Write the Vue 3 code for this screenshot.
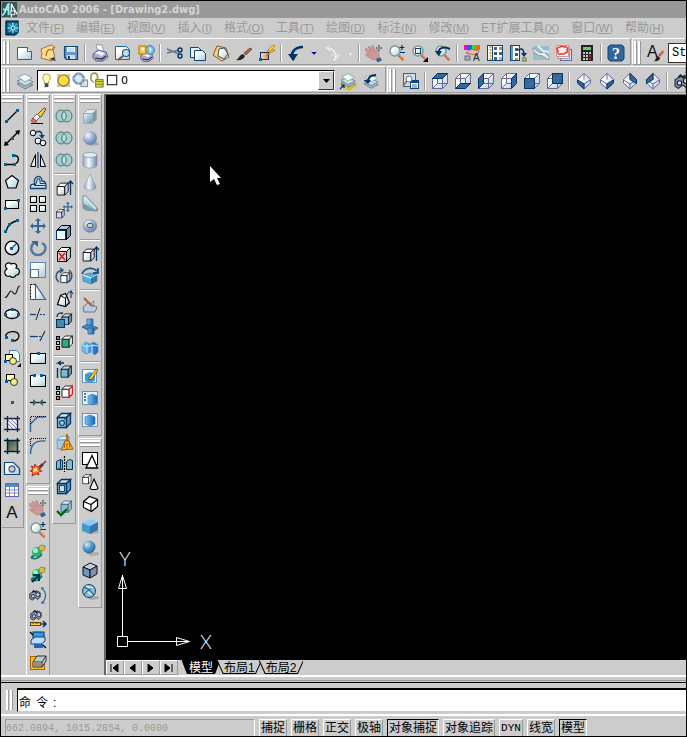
<script setup>
import { ref } from 'vue'

const navy = '#036'
const p = (d, fill = 'none', stroke = 'none', w = 1, extra = '') =>
  `<path d="${d}" fill="${fill}" stroke="${stroke}" stroke-width="${w}" ${extra}/>`
const c = (x, y, r, fill = 'none', stroke = 'none', w = 1) =>
  `<circle cx="${x}" cy="${y}" r="${r}" fill="${fill}" stroke="${stroke}" stroke-width="${w}"/>`
const r = (x, y, w, h, fill = 'none', stroke = 'none') =>
  `<rect x="${x}" y="${y}" width="${w}" height="${h}" fill="${fill}" stroke="${stroke}"/>`
const e = (x, y, rx, ry, fill, stroke = 'none', w = 1) =>
  `<ellipse cx="${x}" cy="${y}" rx="${rx}" ry="${ry}" fill="${fill}" stroke="${stroke}" stroke-width="${w}"/>`
const dot = (x, y, s = 3) => r(x, y, s, s, '#069')
const sub = (x, y, s, inner) => `<g transform="translate(${x} ${y}) scale(${s})">${inner}</g>`
const box = (front = 'url(#pale)', top = '#fff', side = '#cce', line = '#000', w = 1) =>
  p('M2.5 6.5h9v10h-9z', front, line, w) + p('M2.5 6.5l4-4h9l-4 4z', top, line, w) + p('M11.5 6.5l4-4v10l-4 4z', side, line, w)
const view = (face) => {
  const faces = {
    top: 'M1.5 6.5l5-5h10l-5 5z',
    bottom: 'M1.5 16.5l5-5h10l-5 5z',
    left: 'M1.5 6.5l5-5v10l-5 5z',
    right: 'M11.5 6.5l5-5v10l-5 5z',
    front: 'M1.5 6.5h10v10h-10z',
    back: 'M6.5 1.5h10v10h-10z'
  }
  return p('M1.5 6.5l5-5h10v10l-5 5h-10z', 'url(#pale)') + p(faces[face], '#369') +
    p('M1.5 6.5h10v10M11.5 6.5l5-5M1.5 6.5l5-5h10v10l-5 5h-10zM6.5 1.5v10h10M6.5 11.5l-5 5', 'none', '#669') +
    p(faces[face], 'none', navy)
}
const iso = (face) => {
  const faces = { sw: 'M2.5 8l6.5 4v5l-6.5-6z', se: 'M15.5 8l-6.5 4v5l6.5-6z', ne: 'M9 1.5l6.5 6v4l-6.5-4z', nw: 'M9 1.5l-6.5 6v4l6.5-4z' }
  return p('M9 1.5l6.5 6v3.5l-6.5 6-6.5-6v-3.5z', 'url(#pale)') + p(faces[face], '#369') +
    p('M9 1.5l6.5 6v3.5l-6.5 6-6.5-6v-3.5zM2.5 8l6.5 4 6.5-4M9 12v5M9 1.5v6', 'none', '#669') + p(faces[face], 'none', navy)
}
const lens = p('M10.5 11l5 5', 'none', '#c63', 2.5) + p('M11 10.5l5 5', 'none', '#fc9', 0.8) + c(7, 7, 5, 'url(#pale)', '#799', 1.5) + p('M4 7a3 3 0 0 1 3-3', 'none', '#fff', 1.5)
const hand = p('M1 4l5 4-3-5 1.5-.5 4 5-2-5.500 1.500-.5 3 6 1-2 1.500 1 .5 5-2 4-4 .5-6-4-1.500-2 4 1-4-4.500z', '#c99', '#b77', 0.7) +
  p('M11 15l4-2 2 3-3 2h-2z', '#369') + p('M14 1v6M11 4h6M13 2l1-1 1 1M13 6l1 1 1-1M12 3l-1 1 1 1M16 3l1 1-1 1', 'none', '#477', 0.9)
const layers = p('M1 12l8 5 8-4-8-4z', '#9bc', '#567', 0.7) + p('M1 9l8 5 8-4-8-4z', '#cdd', '#567', 0.7) + p('M2 5l7 5 7-4-7-4z', '#eff', '#789', 0.7)
const printer = p('M5 1l6 0 2 7H7z', '#fff', '#88a', 0.8) + p('M2 10l5-4 8 2 2 5-5 4H5l-3-3z', '#aac', '#446', 0.8) + p('M4 9l4-2 6 2-3 3z', '#eef') + p('M4 14l7 1 4-3', 'none', '#224', 1.2)
const paper = p('M1.5 3.5h10l4 4v8h-14z', 'url(#pale)', '#269') + p('M11.5 3.5v4h4', '#fff', '#269')
const rings = e(6, 9, 5, 6, '#acc', '#477', 1) + e(12, 9, 5, 6, '#acc', '#477', 1) + e(6, 9, 3.5, 4.5, 'none', '#9cc') + p('M9 4.5c3 2 3 7 0 9-3-2-3-7 0-9z', '#bdd', '#477')
const camera = p('M1 6l5-3 3 1 3-1 2 2v5l-3 3-3-2-4 3-3-2z', '#8893a8', '#123', 1) + c(5, 9, 2, '#dde', '#123') + c(11, 7, 2.5, '#ccd', '#123') + p('M4 4l2-2 2 2 2-2', 'none', '#123', 1.5)
const cross = p('M9 1l3 3h-2v4h4V6l3 3-3 3v-2h-4v4h2l-3 3-3-3h2v-4H4v2L1 9l3-3v2h4V4H6z', '#369')
const orb = p('M2 15L16 3', 'none', '#164', 2) + c(8, 9, 5, '#3a7') + c(6.5, 7.5, 2.5, '#8fb') + c(13, 5, 3, '#db3', '#864', 0.6) + p('M3 13c-2 4 6 4 10-2', 'none', '#176', 1.6)
const shadow = p('M5 14l12-1 1 3-8 1z', '#aaa')
const swatches = r(1.5, 3.5, 3, 3, '#39f', '#000') + r(1.5, 8.5, 3, 3, '#9f9', '#000') + r(1.5, 13.5, 3, 3, '#f77', '#000')

const art = {
  app: r(1, 1, 16, 16, '#355') + p('M1 15c4 0 5-12 7-12v12M2 9h6', 'none', '#9ee', 2) + p('M11 17V3l6 11', 'none', '#fff', 1.3) + r(10.5, 10.5, 4, 4, '#355', '#fff'),
  doc: p('M2 1h14v13l-3 3H2z', '#047', '#023') + p('M4 3h12v11H4z', '#18a') + p('M10 3v12M4 9h12', 'none', '#fff') + p('M6 5l8 8M14 5l-8 8', 'none', '#9ff', 0.8) + r(8.5, 7.5, 3, 3, '#047', '#9ff'),
  new: paper,
  open: p('M2 5l10-4 4 2-2 3 2 8-3 3-11-3 1-4z', '#ffdc8c', '#963', 0.9) + p('M7 12c0-5 3-8 7-6l1-3', 'none', '#b73', 1.4) + p('M10 15l5-2 2 4z', '#246'),
  save: p('M2.5 2.5h13v13h-11l-2-2z', '#69c', '#147', 1.2) + r(5, 3, 8, 5, '#fff') + p('M6 5h6M6 7h6', 'none', '#9bd') + r(5, 11, 8, 4, '#cde') + r(6, 12, 2, 3, '#147'),
  print: printer,
  preview: p('M1.5 2.5h11l3 3v10h-14z', 'url(#pale)', '#269') + p('M9 12l-5 4', 'none', '#853', 2.2) + c(12, 9, 3.5, '#bde', '#357', 1.2),
  publish: sub(2, 3, 0.85, printer) + c(13, 6, 4.5, '#7be', '#369', 0.7) + p('M12 3l3 2-2 4z', '#dfd') + r(2, 2, 7, 8, '#fc3', '#a70') + c(6, 5, 1.5, '#fff'),
  cut: p('M1 5l12 5M1 9l12-3', 'none', '#678', 1.4) + c(14, 12, 2, 'none', navy, 1.4) + c(14, 6, 2, 'none', navy, 1.4),
  copy: p('M1.5 3.5h8l3 3v7h-11z', '#eef', '#147') + p('M5.5 6.5h8l3 3v7h-11z', 'url(#pale)', '#147'),
  paste: p('M5 2l9 2 3 9-7 4-9-6z', '#fc6', '#853') + p('M7 5l5-1 4 6-4 5-6-3z', 'url(#pale)', '#357'),
  brush: p('M9 9l6-5 2 1-6 6z', '#b63', '#532', 0.7) + p('M1 16c3-1 3-5 7-6l2 2c-1 3-5 5-9 4z', '#222'),
  blockEdit: r(2.5, 8.5, 8, 7, 'url(#orange)', navy) + p('M15 1l-6 6h4l-5 5 9-6h-4l4-4z', '#fd3', '#a70', 0.8) + dot(1, 14, 3),
  undo: p('M7 16C2 10 7 3 16 3', 'none', navy, 2.6) + p('M1 10h10l-5 7z', navy),
  drop: p('M3 7h12l-6 6z', '#009'),
  redo: p('M11 16C16 10 10 4 3 4', 'none', '#fff', 1.6, 'stroke-dasharray="2 1"') + p('M8 11h8l-5 6M3 3l4 4', 'none', '#eec', 1.2),
  dropOff: p('M6 13l6-6v6z', '#fff'),
  pan: hand,
  zoom: lens + p('M14 1v5M11.5 3.5h5M12 8.5h5', 'none', navy, 1.2),
  zoomWin: lens + r(4.5, 4.5, 5, 5, 'none', '#147') + p('M17 13v5h-5z', '#000'),
  zoomPrev: lens + p('M4 10C4 4 9 2 16 5', 'none', navy, 2) + p('M1 7h7l-3 5z', navy),
  props: r(1, 1, 4, 5, '#f0c') + r(5, 1, 4, 5, '#06f') + r(9, 1, 4, 5, '#3d3') + r(13, 1, 4, 5, '#f60') + p('M3 9l5-4 8 2-2 4-7-1z', '#eba', '#844', 0.7) + r(2, 12, 5, 4, '#aab', '#668') + `<text x="10" y="17" font-size="10" font-family="Liberation Sans" fill="#222">A</text>`,
  center: r(1.5, 1.5, 15, 15, '#fff', '#147') + p('M4.5 2v14', 'none', '#da3', 2, 'stroke-dasharray="2 1"') + p('M6.5 2v14', 'none', '#147') + r(8, 3, 3, 3, '#369') + r(13, 3, 3, 3, '#c90') + r(8, 8, 3, 3, '#555') + r(13, 8, 3, 3, '#369') + r(8, 13, 3, 3, '#369') + r(13, 13, 3, 3, '#9bc'),
  palette: r(1.5, 1.5, 9, 15, '#fff', '#147') + p('M3 2v14', 'none', '#69c', 2) + r(6, 4, 3, 3, '#357') + r(6, 9, 3, 3, '#357') + r(6, 14, 3, 2, '#c90') + p('M9 6c5-3 6 1 6 5', 'none', navy, 1.5) + p('M12 9h6l-3 4z', navy) + r(14, 14, 3, 3, '#cf6', '#563'),
  sheet: r(1, 2, 16, 14, '#9bc') + p('M1 4l7 5 4-1 5 5v3l-6-4-5-1-5-4z', '#eee', '#789', 0.7) + p('M6 2l5 5 6 1', 'none', '#dee', 2),
  markup: r(5.5, 5.5, 11, 11, '#dde', '#669') + r(3.5, 3.5, 11, 11, '#fff', '#99b') + r(1.5, 1.5, 12, 11, '#fff', '#c99') + p('M5 3c2-2 3 0 4 0 3-1 4 1 3 3 1 2 0 3-2 3-1 2-3 1-4 1-2 1-4 0-3-3-2-1-1-4 2-4z', '#fee', '#e33', 1.5),
  calc: r(3, 1, 12, 16, '#222') + r(5, 3, 8, 3, '#6c6') + p('M5 9h2M8 9h2M11 9h2M5 12h2M8 12h2M5 15h2M8 15h2', 'none', '#fff', 1.5) + p('M11 12h2M11 15h2', 'none', '#e22', 1.5),
  help: p('M1 3l2-2h12l2 2v12l-2 2H3l-2-2z', '#369', '#147') + `<text x="9" y="15" text-anchor="middle" font-size="16" font-weight="700" font-family="Liberation Serif" fill="#fff">?</text>`,
  textStyle: `<text x="0" y="13" font-size="16" font-family="Liberation Sans" fill="#111">A</text>` + p('M11 11l5-5 1 2-4 5z', '#c63') + p('M7 17c2 0 1-4 4-5l2 2c0 2-3 4-6 3z', '#222'),
  layers,
  layerCur: sub(1, 0, 0.9, layers) + p('M3 12l7 4 7-4 0 2-7 4-7-4z', '#fc0', '#a80', 0.5) + p('M1 17l4-4M2 13h3v3', 'none', navy, 1.2),
  layerPrev: sub(1, 1, 0.9, layers) + p('M6 10c0-5 3-7 8-7', 'none', navy, 2) + p('M2 8h7l-3 4z', navy),
  bulb: p('M5 6a4 4 0 1 1 8 0c0 3-2 3-2 6H7c0-3-2-3-2-6z', '#ffc', '#a90') + r(7, 12, 4, 4, '#447'),
  sun: p('M2 2h4l-4 4zM16 2v4l-4-4zM2 16v-4l4 4zM16 16h-4l4-4z', '#ec3') + c(9, 9, 6, '#fd3', '#777', 1.5),
  vp: r(9.5, 8.5, 7, 7, '#ddd', '#789') + c(7, 7, 6, '#8ab', '#579') + c(7, 7, 3, '#cde', '#fff') + p('M7 1v12M1 7h12M3 3l8 8M11 3l-8 8', 'none', '#def', 0.7),
  lock: p('M2 8V5c0-5 7-5 7 0v4', 'none', '#994', 1.8) + p('M7 8h8v8H7z', '#dd3', '#773') + p('M7 10h8M7 13h8', 'none', '#773') + p('M2 8l3 3', 'none', '#994', 1.5),
  swatch: r(3.5, 3.5, 10, 10, '#fff', '#000'),
  named: r(1.5, 1.5, 12, 13, '#cde', '#369') + r(8.5, 8.5, 8, 8, '#fff', '#147') + r(9, 9, 7, 2, '#147') + p('M10 13h5M10 15h5', 'none', '#369') + c(7, 7, 3, '#eff', '#678') + p('M5 9l-4 5', 'none', '#b63', 2),
  vTop: view('top'), vBottom: view('bottom'), vLeft: view('left'), vRight: view('right'), vFront: view('front'), vBack: view('back'),
  sw: iso('sw'), se: iso('se'), ne: iso('ne'), nw: iso('nw'),
  camera: sub(1, 1, 1.1, camera),

  line: p('M3.5 14.5L14.5 3.5', 'none', '#000', 1.3) + dot(2, 13) + dot(13, 2),
  xline: p('M3 15L15 3', 'none', '#000', 1.4) + p('M1 17l1-5 4 4zM17 1l-1 5-4-4z', '#000') + dot(8, 8),
  pline: p('M2 13.5h9M11 4.5c5 0 6 5 2 8', 'none', '#000', 1.3) + dot(1, 12) + dot(10, 12) + dot(9, 3),
  polygon: p('M9 2.5l6.5 5-2.5 7.5h-8l-2.500-7.500z', 'url(#pale)', '#000', 1.2),
  rect: r(2.5, 5.5, 13, 8, 'url(#pale)', '#000') + dot(1, 12) + dot(14, 4),
  arc: p('M3 15C4 9 7 5 15 3.5', 'none', '#000', 1.3) + dot(1, 13) + dot(5, 6) + dot(13, 2),
  circle: c(9, 9, 6.8, 'url(#pale)', '#000', 1.3) + p('M9 9l4-4', 'none', '#069', 1.5) + dot(7, 8),
  cloud: p('M4 8C0 4 5 0 8 3c4-2 7 1 5 4 5 1 4 7 0 7-1 3-5 3-6 1-5 2-7-5-3-7z', 'url(#pale)', '#000', 1.2),
  spline: p('M2 14c2 2 4-6 6-6s3 5 5 2 1-7 4-7', 'none', '#222', 1.2),
  ellipse: e(9, 9, 7, 4.5, 'url(#pale)', '#000', 1.3) + dot(1, 8) + dot(14, 8) + dot(8, 3),
  ellArc: p('M3 10c-2-6 13-8 13-1 0 3-3 5-6 5', 'none', '#000', 1.3) + dot(2, 9) + dot(8, 12),
  insert: p('M6.5 1.5h7l3 3v8h-10z', '#eff', '#579') + r(2.5, 5.5, 7, 6, '#ffa', '#000') + c(10, 12, 3.5, '#ee8', '#333') + dot(1, 11) + p('M18 14v4h-4z', '#000'),
  block: r(3.5, 3.5, 8, 6, '#ffa', '#000') + c(11, 11, 3.5, '#ee8', '#333') + dot(2, 9),
  point: dot(8, 8),
  hatch: r(4, 4, 10, 10, '#eef') + p('M4 8l6 6M4 4l10 10M8 4l6 6M4 12l2 2M12 4l2 2', 'none', '#66a', 0.8) + p('M1 3.5h16M1 14.5h16M4.5 1v16M14.5 1v16', 'none', '#224', 1.3),
  gradient: r(4, 4, 10, 10, 'url(#olive)') + p('M1 3.5h16M1 14.5h16M4.5 1v16M14.5 1v16', 'none', '#023', 1.5),
  region: p('M1.5 3.5h9l6 6v6h-15z', 'url(#pale)', '#147', 1.2) + c(9, 10, 3, '#ccc', '#469', 1.3),
  table: r(2.5, 2.5, 13, 13, '#fff', '#66a') + r(3, 3, 12, 3, '#58c') + p('M3 9h12M3 12h12M6.5 6v9M11.5 6v9', 'none', '#88b'),
  mtext: `<text x="9" y="15" text-anchor="middle" font-size="17" font-family="Liberation Sans" fill="#111">A</text>`,

  erase: p('M8 8l7-7 2 1-5 8z', '#fc3', '#333', 0.8) + p('M3 12l5-5 3 3-4 4z', '#fff', '#555', 0.8) + p('M2 14l2-3 4 3-2 2z', '#e66', '#833', 0.7) + p('M2 16.5h12', 'none', '#000'),
  copyObj: c(4, 4, 2.8, 'url(#pale)', '#000') + c(9, 12, 3, 'url(#pale)', '#000') + c(14, 14, 2.8, 'url(#pale)', '#000') + p('M7 3c5-2 6 1 6 4', 'none', '#147', 1.6) + p('M10 6h6l-3 4z', '#147'),
  mirror: p('M1.5 15.5l5-12v12zM16.5 15.5l-5-12v12z', '#eee', '#000') + p('M9 1v16', 'none', '#147', 1.3),
  offset: p('M1.5 15.5c-1-4 2-5 4-4C4 2 13 1 13 8c4 0 4 2 4 7.500z', '#cde', '#147', 1.3) + p('M5 12.500c3 0 2-7 4.500-7s1 5 2 5h5', 'none', '#147', 1.1) + p('M5 12.500h11', 'none', '#147'),
  array: [[1.5, 1.5], [10.5, 1.5], [1.5, 10.5], [10.5, 10.5]].map(([x, y]) => r(x, y, 6, 6, 'url(#pale)', '#000')).join(''),
  move: cross,
  rotate: p('M6 3C-1 8 3 16 9 16s11-8 4-12', 'none', '#579', 2.4) + p('M2 2h7v6z', '#369'),
  scale: r(1.5, 1.5, 15, 15, 'url(#pale)', '#58b') + r(1.5, 8.5, 8, 8, '#eff') + p('M1.5 8.5h8v8h-8z', 'none', '#000', 1.2, 'stroke-dasharray="1 1"'),
  stretch: p('M1.5 1.5h5v15h-5z', '#fff', '#000', 1, 'stroke-dasharray="2 1"') + p('M6.5 1.5v15h10z', 'url(#pale)', '#369', 1.2),
  trim: p('M1 9.5h6', 'none', '#147', 1.3) + p('M11 9.5h6', 'none', '#147', 1.2, 'stroke-dasharray="2 1"') + p('M7 15l4-12', 'none', '#222'),
  extend: p('M1 9.5h6', 'none', '#147', 1.3) + p('M7 9.5h6', 'none', '#147', 1.2, 'stroke-dasharray="2 1"') + p('M11 14l5-10', 'none', '#147', 1.2),
  breakPt: r(1.5, 4.5, 15, 10, 'url(#pale)', '#000') + dot(8, 3),
  breakObj: p('M5 4.5H1.5v11h15v-11H13', 'url(#pale)', '#000') + dot(4, 3) + dot(11, 3),
  join: p('M1 9.5h16', 'none', '#000', 1.2) + p('M4 6v7l4-3.500zM14 6v7l-4-3.500z', '#366'),
  chamfer: p('M1.5 17V9l7-7h8', 'none', '#369', 1.4) + p('M1.5 9V1.5H17', 'none', '#000', 1.2, 'stroke-dasharray="1 1"'),
  fillet: p('M1.5 17c0-9 4-14 15-13', 'none', '#369', 1.5) + p('M1.5 9V1.5H17', 'none', '#000', 1.2, 'stroke-dasharray="1 1"'),
  explode: p('M9 10l5-5', 'none', '#444', 3) + p('M14 5l3-3', 'none', '#922', 1.5) + p('M2 7l3 1 1-3 2 3 4-1-2 3 3 2-4 1 1 3-3-1-4 2 1-4-3-1 3-2z', '#f63', '#a00', 0.7) + p('M4 9l2 1 2-2 0 3 2 2-3-1-3 2 1-3z', '#ff6'),
  orbit: orb,
  orbit2: orb + p('M3 17l6-6M4 10h6v6', 'none', '#035', 2),
  swivel: sub(0, 2, 0.8, camera) + p('M12 1c6 3 6 12 0 15M12 1l3 0M12 16h4', 'none', '#369', 1.2),
  distance: sub(1, 0, 0.8, camera) + r(1.5, 13.5, 10, 3, '#fc3', '#640') + p('M4 13v2M7 13v2M9 13v2', 'none', '#640') + p('M12 15h4M14 12l3 3-3 3', 'none', '#036', 1.5),
  clipPlane: r(4, 1, 11, 6, '#39e', '#036') + p('M2 9l4-3h10v4l-4 3H2z', '#bdf', '#147') + r(5, 13, 9, 4, '#26b') + p('M1 1l3 3M17 17l-3-3', 'none', '#000', 1.3),
  clipFront: r(1.5, 3.5, 14, 13, '#fb2', '#a60') + p('M4 9l4-6h9v5l-4 6H4z', '#bcc', '#333') + p('M4 9h9l4-6M13 9v5', 'none', '#333') + r(4, 9, 8, 4, '#a87'),
  clipBack: r(1.5, 3.5, 15, 13, '#875', '#543'),

  union: rings, subtract: rings, intersect: rings,
  extrudeFace: sub(0, 2, 0.85, box()) + p('M15.5 16V3M13 5l2.500-3L18 5', 'none', navy, 1.3),
  moveFace: sub(0, 7, 0.6, box('#cde')) + sub(7, 0, 0.65, cross),
  offsetFace: box('#8cc', '#acd', '#69a') + r(1.5, 7.5, 9, 9, '#eff', '#036'),
  deleteFace: box('#ecc', '#fff', '#acc') + p('M4 8l6 7M10 8l-6 7', 'none', '#c22', 1.7),
  rotateFace: sub(4, 4, 0.7, box('#eff')) + p('M4 15C-1 11 1 4 7 3M14 3c5 4 3 11-3 13M5 1l3 2-3 3', 'none', '#357', 1.5),
  taperFace: p('M2.5 15.5l3-9 5-2 4 9-4 4z', 'url(#pale)', '#000', 1.2) + p('M5.5 6.5l5 3v7M10.5 9.5l2-5', 'none', '#000') + p('M16 9V2l-3 2M16 2l2 3', 'none', '#147', 1.2),
  copyFace: sub(5, 1, 0.75, box('#8bd', '#cde', '#69a')) + r(1.5, 8.5, 8, 8, '#48a', '#036') + p('M2 6c0-4 3-4 6-4', 'none', '#036', 1.3),
  colorFace: sub(5, 1, 0.8, box('#3a7', '#fff', '#dee')) + swatches,
  copyEdge: sub(4, 3, 0.8, box('#7bd', '#cde', '#69a')) + p('M2.5 7v10M9 2H3l3-2M3 2l3 2', 'none', '#036', 1.4),
  colorEdge: sub(5, 1, 0.8, box('#fff', '#fff', '#edd') + p('M11.5 6.5v10l4-4v-10z', '#fee', '#d22', 1.6)) + swatches,
  imprint: box('#9cd', '#cee', '#69a', '#036', 1.3) + c(7, 12, 2.5, 'none', '#147', 1.2) + p('M8 10l3-3', 'none', '#147'),
  clean: sub(0, 1, 0.9, box('#9ce', '#dee', '#7ac', '#69b')) + p('M11 1h2v7h-2z', '#c60') + p('M10 8h4l4 8-12 1z', '#fb3', '#a50') + p('M10 10l-1 5M12 10v6M14 10l1 5', 'none', '#a50'),
  separate: p('M1.5 6.5l4-2v9l-4 1zM5.5 4.5l2 1v9l-6 0M11.5 6.5l3-2 3 1v9h-6z', '#8bb', '#035') + p('M9.5 1v16', 'none', '#000', 1.2, 'stroke-dasharray="2 1"'),
  shell: box('#8bc', '#cde', '#69a', '#036', 1.3) + r(4.5, 8.5, 5, 6, '#cde', '#147'),
  check: sub(4, 0, 0.8, box('#8bd', '#def', '#9bc', '#357')) + p('M2 12l4 4 6-6', 'none', '#060', 2.3),

  box: box('url(#steel)', '#dee', '#79a', '#9ab'),
  sphere: shadow + c(9, 9, 7, 'url(#ball)'),
  cylinder: p('M2 4v10c0 4 14 4 14 0V4z', 'url(#tube)', '#88a', 0.6) + e(9, 4, 7, 2.5, '#dee', '#88a', 0.7),
  cone: p('M9 1L3 14c0 4 12 4 12 0z', 'url(#tube)', '#88a', 0.5),
  wedge: p('M2 1v12l3 2 11 1 1-2L5 1z', 'url(#steel)', '#678', 0.8) + p('M3 2l12 12', 'none', '#cee', 2) + p('M2 8v5l3 2 9 1z', '#79a'),
  torus: e(9, 9, 7, 6.5, 'url(#ball)', '#89a', 0.6) + e(9, 8.5, 3, 2.3, '#ccc', '#456', 1),
  extrude: sub(0, 2, 0.85, box()) + p('M15.5 16V3M13 5l2.500-3L18 5', 'none', navy, 1.3),
  revolve: p('M2 8l7-2 7 2v6l-6 3-8-3z', '#5ad', '#37a', 0.7) + p('M2 8l8 3 6-3', 'none', '#cff', 1.3) + p('M10 11v6l6-3V8z', '#37a') + p('M1 7c3-7 11-7 15-3M17 1v5h-5', 'none', '#257', 1.8),
  slice: p('M2 12l5-4 9 4-2 5H3z', '#bcd', '#678') + p('M3 3l8 8', 'none', '#b54', 2.2) + p('M10 8l3-2-1 6z', '#ddd', '#555', 0.6),
  section: p('M1 10l6-3 10 4-6 4z', '#48c', '#147', 0.7) + p('M6 2h6v6H6zM7 11h6v6H7z', 'url(#blue)', '#258', 0.7),
  interfere: p('M1 6l4-3 4 2 4-2 4 3v7l-3 3-4-3-5 2-4-3z', 'url(#blue)', '#48b', 0.6) + p('M6 5v9M11 6v8M1 6l5 2 5-2 6 1', 'none', '#cef', 1),
  soldraw: r(1.5, 2.5, 14, 13, '#eff', '#69b') + p('M4 7l5-2 5 2v7l-5 2-5-2z', '#49d') + p('M8 11l7-9 2 1-6 9-3 1z', '#fc3', '#640', 0.8),
  solview: r(1.5, 2.5, 15, 13, '#eef', '#69a') + p('M3 5h2M3 8h2M3 11h2', 'none', '#258', 1.3) + p('M7 7l4-2 5 2v7l-4 2-5-2z', 'url(#blue)', '#27b', 0.6),
  solprof: r(1.5, 2.5, 15, 13, '#eef', '#69a') + p('M4 6l5-2 5 2v7l-5 2-5-2z', 'url(#blue)', '#27b', 0.6),
  wire2d: r(1.5, 1.5, 15, 12, '#fff', '#000') + p('M11 4.5l5.500 12.500H5z', '#fff', '#000', 1.3),
  wire3d: sub(0, 0, 0.65, box('#fff', '#fff', '#fff')) + p('M13 6l4 9c0 2-8 2-8 0z', '#eee', '#000', 1.1),
  hidden: p('M2.5 6.5l6-5 8 3v7l-6 5-8-4z', '#fff', '#000', 1.2) + p('M2.5 6.5l7.500 3 6.500-5M10 9.5v7', 'none', '#000', 1.2),
  flat: shadow + p('M1 6l8-4 8 3-8 4z', '#8cf') + p('M1 6l8 3v8l-8-3z', '#49c') + p('M9 9l8-4v8l-8 4z', '#37a'),
  gouraud: shadow + c(8, 8, 6.5, 'url(#blueBall)'),
  flatEdge: p('M2 6l7-4 7 3-7 4z', '#ccd', '#112', 1) + p('M2 6l7 3v8l-7-3z', '#69b', '#112') + p('M9 9l7-4v8l-7 4z', '#88a', '#112'),
  gouraudEdge: shadow + c(8, 8, 6.5, '#8bd', '#146') + p('M3 4c5 2 8 5 10 8M13 3C9 5 5 9 3 12', 'none', '#146') + p('M5 3c3 2 5 2 7 1M7 9l3 3', 'none', '#dff', 1.4)
}

const menus = [
  ['文件', 'F'], ['编辑', 'E'], ['视图', 'V'], ['插入', 'I'], ['格式', 'O'], ['工具', 'T'],
  ['绘图', 'D'], ['标注', 'N'], ['修改', 'M'], ['ET扩展工具', 'X'], ['窗口', 'W'], ['帮助', 'H']
]
const list = (s) => s.split(' ')
const standard = list('new open save | print preview publish | cut copy paste brush blockEdit | undo drop redo dropOff | pan zoom zoomWin zoomPrev | props center palette sheet markup calc | help')
const views = list('named | vTop vBottom vLeft vRight vFront vBack | sw se ne nw | camera')
const columns = [
  [list('line xline pline polygon rect arc circle cloud spline ellipse ellArc insert block point hatch gradient region table mtext')],
  [
    list('erase copyObj mirror offset array move rotate scale stretch trim extend breakPt breakObj join chamfer fillet explode'),
    list('pan zoom orbit orbit2 swivel distance clipPlane clipFront clipBack')
  ],
  [list('union subtract intersect | extrudeFace moveFace offsetFace deleteFace rotateFace taperFace copyFace colorFace | copyEdge colorEdge | imprint clean separate shell check')],
  [
    list('box sphere cylinder cone wedge torus | extrude revolve | slice section interfere | soldraw solview solprof'),
    list('wire2d wire3d hidden flat gouraud flatEdge gouraudEdge')
  ]
]
const layerIcons = list('bulb sun vp lock swatch')
const navs = [
  ['第一', 'M4 3v8M11 3v8l-5-4z'], ['上一', 'M10 3v8l-5-4z'], ['下一', 'M5 3v8l5-4z'], ['最后', 'M11 3v8M4 3v8l5-4z']
]
const tabs = ['模型', '布局1', '布局2']
const active = ref('模型')
const toggles = ref([
  { label: '捕捉', on: false }, { label: '栅格', on: false }, { label: '正交', on: false }, { label: '极轴', on: false },
  { label: '对象捕捉', on: true }, { label: '对象追踪', on: false }, { label: 'DYN', on: false }, { label: '线宽', on: false }, { label: '模型', on: true }
])
const layer = ref('0')
const style = ref('Standard')
const command = ref('')
</script>

<template>
  <div class="window">
    <svg class="defs" aria-hidden="true">
      <defs>
        <linearGradient id="pale" x1="0" y1="0" x2="1" y2="1"><stop offset="0.3" stop-color="#fff" /><stop offset="1" stop-color="#a5cbd8" /></linearGradient>
        <linearGradient id="steel" x1="0" y1="0" x2="1" y2="1"><stop offset="0" stop-color="#e8f8fa" /><stop offset="1" stop-color="#6790ad" /></linearGradient>
        <linearGradient id="tube"><stop offset="0" stop-color="#8fa3c0" /><stop offset="0.4" stop-color="#f2fbfb" /><stop offset="1" stop-color="#7088ac" /></linearGradient>
        <linearGradient id="blue"><stop offset="0" stop-color="#7cc4f4" /><stop offset="1" stop-color="#1668b4" /></linearGradient>
        <linearGradient id="orange"><stop offset="0" stop-color="#ffe0c0" /><stop offset="1" stop-color="#f08050" /></linearGradient>
        <linearGradient id="olive" x1="0" y1="0" x2="1" y2="1"><stop offset="0" stop-color="#254" /><stop offset="1" stop-color="#a98" /></linearGradient>
        <radialGradient id="ball" cx="0.35" cy="0.3" r="0.7"><stop offset="0" stop-color="#f2faff" /><stop offset="0.6" stop-color="#8fa8d0" /><stop offset="1" stop-color="#6a82ac" /></radialGradient>
        <radialGradient id="blueBall" cx="0.35" cy="0.3" r="0.7"><stop offset="0" stop-color="#cdeeff" /><stop offset="0.5" stop-color="#5a9cc8" /><stop offset="1" stop-color="#2f6a9a" /></radialGradient>
      </defs>
    </svg>

    <header class="title">
      <svg class="icon" viewBox="0 0 18 18" v-html="art.app" />
      <h1>AutoCAD 2006 - [Drawing2.dwg]</h1>
    </header>

    <nav class="menu">
      <svg class="icon doc" viewBox="0 0 18 18" v-html="art.doc" />
      <button v-for="[name, key] in menus" :key="key" type="button">{{ name }}<span>(<u>{{ key }}</u>)</span></button>
    </nav>

    <div class="row">
      <div class="bar">
        <i class="grip" />
        <template v-for="(name, n) in standard" :key="n">
          <i v-if="name === '|'" class="sep" />
          <button v-else type="button" class="tool" :class="{ narrow: name.startsWith('drop') }" :aria-label="name">
            <svg class="icon" viewBox="0 0 18 18" v-html="art[name]" />
          </button>
        </template>
      </div>
      <div class="bar rest">
        <i class="grip" />
        <button type="button" class="tool" aria-label="textStyle"><svg class="icon" viewBox="0 0 18 18" v-html="art.textStyle" /></button>
        <select v-model="style" class="style" aria-label="文字样式"><option>Standard</option></select>
      </div>
    </div>

    <div class="row">
      <div class="bar">
        <i class="grip" />
        <button type="button" class="tool" aria-label="layers"><svg class="icon" viewBox="0 0 18 18" v-html="art.layers" /></button>
        <div class="combo">
          <svg v-for="name in layerIcons" :key="name" class="icon" viewBox="0 0 18 18" v-html="art[name]" />
          <select v-model="layer" aria-label="图层"><option>0</option></select>
          <span class="arrow"><svg viewBox="0 0 7 4"><path d="M0 0h7L3.5 4z" /></svg></span>
        </div>
        <button type="button" class="tool" aria-label="layerCur"><svg class="icon" viewBox="0 0 18 18" v-html="art.layerCur" /></button>
        <button type="button" class="tool" aria-label="layerPrev"><svg class="icon" viewBox="0 0 18 18" v-html="art.layerPrev" /></button>
      </div>
      <div class="bar rest">
        <i class="grip" />
        <template v-for="(name, n) in views" :key="n">
          <i v-if="name === '|'" class="sep" />
          <button v-else type="button" class="tool" :aria-label="name">
            <svg class="icon" viewBox="0 0 18 18" v-html="art[name]" />
          </button>
        </template>
      </div>
    </div>

    <div class="work">
      <aside class="docks">
        <div v-for="(column, n) in columns" :key="n" class="column">
          <div v-for="(items, m) in column" :key="m" class="vbar">
            <i class="vgrip" />
            <template v-for="(name, k) in items" :key="k">
              <i v-if="name === '|'" class="vsep" />
              <button v-else type="button" class="vtool" :aria-label="name">
                <svg class="icon" viewBox="0 0 18 18" v-html="art[name]" />
              </button>
            </template>
          </div>
        </div>
      </aside>

      <main class="view">
        <div class="canvas">
          <svg class="pointer" viewBox="0 0 12 21"><path d="M1 1v16l4-3 3 6 3-1-3-6h4z" fill="#fff" /></svg>
          <svg class="ucs" viewBox="0 0 100 106">
            <g fill="none" stroke="#fff">
              <path d="M5.5 90.5h10v10h-10zM10.5 90V30M16 95.5h49" />
              <path d="M10.5 29.5l-4 13h8zM10.5 29v13M64.5 91.5v8l13-4zM64 95.5h13" />
            </g>
            <text x="13" y="20" text-anchor="middle">Y</text>
            <text x="94" y="103" text-anchor="middle">X</text>
          </svg>
        </div>
        <div class="tabs">
          <button v-for="[name, d] in navs" :key="name" type="button" class="nav" :aria-label="name">
            <svg viewBox="0 0 15 14"><path :d="d" fill="#000" stroke="#000" /></svg>
          </button>
          <div class="sheets">
            <button v-for="tab in tabs" :key="tab" type="button" class="sheet" :class="{ current: tab === active }" @click="active = tab">
              <svg viewBox="0 0 44 14" preserveAspectRatio="none"><path d="M0 0l6 13.5h32L44 0" /></svg>
              <span>{{ tab }}</span>
            </button>
          </div>
        </div>
      </main>
    </div>

    <section class="command">
      <i class="grip" />
      <label class="prompt">
        <span>命</span><span>令</span><span>:</span>
        <input v-model="command" type="text" aria-label="命令">
      </label>
    </section>

    <footer class="status">
      <output class="coords">662.0894, 1015.2854, 0.0000</output>
      <button v-for="(t, n) in toggles" :key="n" type="button" :class="{ on: t.on, latin: t.label === 'DYN' }" @click="t.on = !t.on">{{ t.label }}</button>
    </footer>
  </div>
</template>

<style>
body {
  margin: 0;
  background: #000;
}
</style>

<style scoped>
.window {
  box-sizing: border-box;
  display: flex;
  flex-direction: column;
  height: 100vh;
  border: 1px solid #000;
  overflow: hidden;
  background: #ccc;
  color: #000;
  font: 12px/16px "Liberation Sans", "Noto Sans CJK SC", sans-serif;
}
.defs {
  position: absolute;
  width: 0;
  height: 0;
}
button,
select,
input {
  margin: 0;
  padding: 0;
  border: 0;
  border-radius: 0;
  background: none;
  color: inherit;
  font: inherit;
}
.icon {
  display: block;
  flex: none;
  width: 18px;
  height: 18px;
  overflow: visible;
}

.title {
  display: flex;
  align-items: center;
  gap: 1px;
  flex: none;
  height: 17px;
  background: #999;
  color: #d4d4d4;
}
.title .icon {
  width: 17px;
  height: 17px;
}
h1 {
  margin: 0;
  font: bold 11px/16px "DejaVu Sans Condensed", "DejaVu Sans", sans-serif;
}

.menu {
  display: flex;
  align-items: center;
  gap: 12px;
  flex: none;
  height: 20px;
  padding-left: 3px;
  color: #999;
  white-space: nowrap;
}
.menu .doc {
  width: 16px;
  height: 16px;
  margin-right: -6px;
}
.menu span {
  font-size: 11px;
}

.row {
  display: flex;
  gap: 1px;
  flex: none;
  height: 28px;
  overflow: hidden;
}
.bar {
  display: flex;
  align-items: center;
  flex: none;
  box-sizing: border-box;
  height: 27px;
  padding: 2px 3px 0 0;
  border: 1px solid;
  border-color: #fff #999 #999 #fff;
}
.rest {
  flex: 1 0 auto;
  width: 0;
}
.grip {
  flex: none;
  box-sizing: border-box;
  width: 7px;
  height: 23px;
  margin: 0 3px 0 1px;
  background: linear-gradient(90deg, #fff 2px, #999 2px 3px, #ccc 3px 4px, #fff 4px 6px, #999 6px);
}
.tool {
  display: grid;
  place-items: center;
  flex: none;
  width: 23px;
  height: 24px;
}
.narrow {
  width: 13px;
}
.narrow .icon {
  width: 8px;
  height: 8px;
}
.sep {
  flex: none;
  box-sizing: border-box;
  width: 2px;
  height: 18px;
  margin: 0 2px;
  border-left: 1px solid #999;
  border-right: 1px solid #fff;
}
.style {
  flex: 1;
  height: 20px;
  margin-left: 1px;
  padding-left: 3px;
  border: 1px solid #333;
  border-right: 0;
  background: #fff;
  font: 12px/16px "Liberation Mono", monospace;
  appearance: none;
}
.combo {
  display: flex;
  align-items: center;
  box-sizing: border-box;
  width: 298px;
  height: 21px;
  margin: 0 1px;
  border: 1px solid;
  border-color: #000 #fff #fff #000;
  background: #fff;
}
.combo .icon {
  width: 17px;
  height: 17px;
}
.combo .icon:last-of-type {
  margin-left: -2px;
}
.combo select {
  flex: 1;
  height: 19px;
  appearance: none;
  font: 11px/16px "DejaVu Sans", sans-serif;
}
.arrow {
  display: grid;
  place-items: center;
  box-sizing: border-box;
  width: 16px;
  height: 19px;
  border: 1px solid;
  border-color: #fff #333 #333 #fff;
  background: #ccc;
}
.arrow svg {
  width: 7px;
  height: 4px;
}

.work {
  display: flex;
  flex: 1;
  min-height: 0;
}
.docks {
  display: flex;
  gap: 2px;
  padding-right: 2px;
  overflow: hidden;
}
.column {
  display: flex;
  flex-direction: column;
  gap: 2px;
  width: 24px;
}
.column:first-child {
  width: 23px;
}
.vbar {
  display: flex;
  flex-direction: column;
  align-items: center;
  flex: none;
  padding-bottom: 4px;
  border: solid;
  border-width: 1px 1px 1px 0;
  border-color: #fff #999 #999 #fff;
}
.column + .column .vbar {
  border-left-width: 1px;
}
.vgrip {
  width: 20px;
  height: 7px;
  margin: 1px 0 2px;
  background: linear-gradient(#fff 2px, #999 2px 3px, #ccc 3px 4px, #fff 4px 6px, #999 6px);
}
.vtool {
  display: grid;
  place-items: center;
  width: 22px;
  height: 22px;
}
.vsep {
  box-sizing: border-box;
  width: 20px;
  height: 2px;
  margin: 2px 0;
  border-top: 1px solid #999;
  border-bottom: 1px solid #fff;
}

.view {
  display: flex;
  flex-direction: column;
  flex: 1;
  min-width: 0;
  border: solid #666;
  border-width: 1px 0 0 2px;
}
.canvas {
  position: relative;
  flex: 1;
  min-height: 0;
  background: #000;
  overflow: hidden;
}
.pointer {
  position: absolute;
  left: 103px;
  top: 70px;
  width: 12px;
  height: 21px;
}
.ucs {
  position: absolute;
  left: 6px;
  bottom: 8px;
  width: 100px;
  height: 106px;
}
.ucs text {
  fill: #fff;
  font: 300 19px Lato, sans-serif;
}
.tabs {
  display: flex;
  flex: none;
  height: 15px;
}
.nav {
  box-sizing: border-box;
  width: 18px;
  height: 15px;
  border: 1px solid;
  border-color: #fff #999 #999 #fff;
}
.nav svg {
  display: block;
  width: 15px;
  height: 14px;
}
.sheets {
  display: flex;
  margin-left: 4px;
}
.sheet {
  position: relative;
  height: 15px;
  margin-right: -3px;
  padding: 0 7px;
  line-height: 14px;
}
.sheet svg {
  position: absolute;
  inset: 0;
  width: 100%;
  height: 14px;
}
.sheet path {
  fill: #ccc;
  stroke: #000;
}
.sheet span {
  position: relative;
}
.current {
  color: #fff;
}
.current path {
  fill: #000;
}

.command {
  display: flex;
  align-items: center;
  flex: none;
  height: 24px;
  padding: 11px 0 2px 4px;
  border-top: 2px solid #fff;
  background: linear-gradient(#ccc 3px, #999 3px 4px, #ccc 4px 5px, #000 5px 6px, #ccc 6px);
}
.command .grip {
  height: 20px;
  margin: 0 4px 0 1px;
}
.prompt {
  display: flex;
  flex: 1;
  gap: 5px;
  align-items: flex-end;
  box-sizing: border-box;
  height: 24px;
  padding-left: 1px;
  border: 1px solid;
  border-width: 2px 0 1px 1px;
  border-color: #000 #ccc #ccc #000;
  background: #fff;
}
.prompt input {
  flex: 1;
  height: 16px;
  outline: 0;
}

.status {
  display: flex;
  gap: 4px;
  flex: none;
  height: 17px;
  padding: 3px 0 0 4px;
  border-top: 2px solid #fff;
  overflow: hidden;
  white-space: nowrap;
}
.coords {
  box-sizing: border-box;
  flex: 0 1 250px;
  min-width: 0;
  border: 1px solid;
  border-color: #999 #fff #ccc #999;
  color: #999;
  font: 10px/18px "Liberation Mono", monospace;
}
.status button {
  flex: none;
  box-sizing: border-box;
  height: 18px;
  padding: 0 1px;
  border: 1px solid;
  border-color: #fff #999 #ccc #fff;
  line-height: 17px;
}
.status .on {
  border-color: #000 #fff #ccc #000;
}
.status .latin {
  font-family: "Liberation Mono", monospace;
  font-size: 11px;
}
</style>
